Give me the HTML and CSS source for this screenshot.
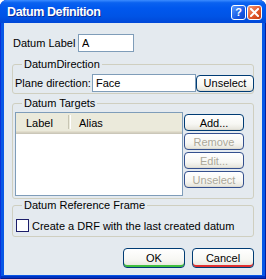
FILE: index.html
```html
<!DOCTYPE html>
<html lang="en">
<head>
    <meta charset="UTF-8">
    <title>Datum Definition</title>
    <link rel="stylesheet" href="styles.css">
</head>
<body>

    <div class="window">
        <!-- Barre de titre -->
        <div class="titlebar">
            <span class="title">Datum Definition</span>
            <div class="caption-buttons">
                <button class="cap help">?</button>
                <button class="cap close">
                    <svg width="9" height="9" viewBox="0 0 9 9">
                        <path d="M1 1 L8 8 M8 1 L1 8" stroke="#fff" stroke-width="2" stroke-linecap="square"/>
                    </svg>
                </button>
            </div>
        </div>

        <div class="client">
            <div class="label-row">
                <span>Datum Label</span>
                <input class="field" type="text" value="A">
            </div>

            <fieldset class="group group-dir">
                <legend>DatumDirection</legend>
                <div class="dir-row">
                    <span>Plane direction:</span>
                    <input class="field" type="text" value="Face">
                    <button class="btn small">Unselect</button>
                </div>
            </fieldset>

            <fieldset class="group group-targets">
                <legend>Datum Targets</legend>
                <div class="targets-body">
                    <div class="list">
                        <div class="list-head">
                            <span class="col col-label">Label</span>
                            <span class="sep"></span>
                            <span class="col col-alias">Alias</span>
                        </div>
                    </div>
                    <div class="side-buttons">
                        <button class="btn small">Add...</button>
                        <button class="btn small" disabled>Remove</button>
                        <button class="btn small" disabled>Edit...</button>
                        <button class="btn small" disabled>Unselect</button>
                    </div>
                </div>
            </fieldset>

            <fieldset class="group group-drf">
                <legend>Datum Reference Frame</legend>
                <label class="check">
                    <span class="box"></span>
                    Create a DRF with the last created datum
                </label>
            </fieldset>

            <div class="footer">
                <button class="btn big ok">OK</button>
                <button class="btn big cancel">Cancel</button>
            </div>
        </div>
    </div>

</body>
</html>
```

FILE: styles.css
```css
/* Fenetre style Windows XP */
body {
    margin: 0;
    background-color: #ffffff;
    font-family: "Liberation Sans", Arial, sans-serif;
    font-size: 11px;
    color: #000;
}
.window {
    width: 266px;
    height: 279px;
    box-sizing: border-box;
    display: flex;
    flex-direction: column;
    background-color: #0757e6;
    border-radius: 7px 7px 0 0;
    box-shadow: inset 1px 0 #0831d9, inset -1px 0 #001ea0, inset 0 -1px #001a8c, inset 0 -3px #0033c2;
}
/* Barre de titre */
.titlebar {
    height: 23px;
    display: flex;
    align-items: center;
    justify-content: space-between;
    padding: 0 4px 0 7px;
    border-radius: 7px 7px 0 0;
    background: linear-gradient(to bottom, #3b8cff 0%, #0a62f0 12%, #0058ee 35%, #0054e6 70%, #0048d8 100%);
}
.title {
    color: #fff;
    font-weight: bold;
    font-size: 12.5px;
    letter-spacing: -0.4px;
    text-shadow: 1px 1px #0b2c9a;
}
.caption-buttons {
    display: flex;
    gap: 1px;
    margin-top: 1px;
}
.cap {
    width: 15px;
    height: 15px;
    padding: 0;
    border: 1px solid #fff;
    border-radius: 3px;
    display: flex;
    align-items: center;
    justify-content: center;
    color: #fff;
    font-family: "Liberation Sans", Arial, sans-serif;
    font-weight: bold;
    font-size: 11px;
}
.help {
    background: linear-gradient(135deg, #5a9bff, #1759e6 60%, #0d46c9);
}
.close {
    background: linear-gradient(135deg, #f29a78, #e2572b 55%, #c23b10);
}
/* Zone cliente */
.client {
    flex: 1;
    margin: 0 4px 4px;
    padding: 11px 8px 0;
    background-color: #e4eaef;
}
.label-row {
    display: grid;
    grid-template-columns: 65px 56px;
    align-items: center;
    height: 18px;
    padding-left: 1px;
}
.field {
    box-sizing: border-box;
    height: 18px;
    margin: 0;
    padding: 0 3px;
    border: 1px solid #7f9db9;
    background: #fff;
    font-family: inherit;
    font-size: 11px;
    color: #000;
    outline: none;
}
/* Groupes */
.group {
    margin: 0;
    min-width: 0;
    border: 1px solid #cfcfc0;
    border-radius: 3px;
    padding: 0 0 0 1px;
}
.group legend {
    margin-left: 8px;
    padding: 0 2px;
    line-height: 13px;
}
.group-dir {
    margin-top: 6px;
    padding-top: 3px;
    padding-bottom: 1px;
}
.dir-row {
    display: grid;
    grid-template-columns: 78px 104px 58px;
    align-items: center;
    height: 18px;
}
.dir-row span {
    padding-left: 1px;
}
.dir-row .field {
    width: 104px;
}
.group-targets {
    margin-top: 3px;
    padding-top: 2px;
    padding-bottom: 2px;
}
.targets-body {
    display: flex;
    gap: 1px;
    padding-left: 1px;
}
.list {
    box-sizing: border-box;
    width: 168px;
    height: 84px;
    border: 1px solid #7f9db9;
    background: #fff;
}
.list-head {
    display: flex;
    height: 16px;
    padding-top: 2px;
    line-height: 16px;
    background-color: #ebeadb;
    box-shadow: 0 1px #e2decd, 0 2px #d6d2c2, 0 3px #cbc7b8;
}
.col-label {
    width: 42px;
    padding-left: 10px;
}
.sep {
    width: 1px;
    height: 14px;
    border-left: 1px solid #c7c5b2;
    border-right: 1px solid #fff;
}
.col-alias {
    padding-left: 8px;
}
.side-buttons {
    display: flex;
    flex-direction: column;
    gap: 2px;
    padding-top: 2px;
}
/* Boutons */
.btn {
    box-sizing: border-box;
    margin: 0;
    padding: 0;
    border: 1px solid #003c74;
    border-radius: 4px;
    background: linear-gradient(to bottom, #ffffff 0%, #f7f7f3 60%, #e9e8e0 90%, #d8d6cc 100%);
    font-family: inherit;
    font-size: 11px;
    color: #000;
}
.btn:disabled {
    color: #aca899;
    border-color: #34508e;
}
.btn.small {
    height: 17px;
}
.dir-row .btn.small {
    width: 58px;
    height: 17px;
}
.side-buttons .btn {
    width: 60px;
}
.group-drf {
    margin-top: 0;
    padding-top: 7px;
    padding-bottom: 4px;
}
.check {
    display: flex;
    align-items: center;
    gap: 3px;
    height: 13px;
    padding-left: 2px;
}
.box {
    box-sizing: border-box;
    width: 13px;
    height: 13px;
    border: 1px solid #1c1e6a;
    background: #fff;
}
.footer {
    display: flex;
    justify-content: flex-end;
    gap: 7px;
    margin-top: 11px;
}
.btn.big {
    width: 62px;
    height: 20px;
}
.ok {
    box-shadow: inset 0 -2px #3fbf3f;
}
.cancel {
    box-shadow: inset 0 -2px #e03030;
}
```
